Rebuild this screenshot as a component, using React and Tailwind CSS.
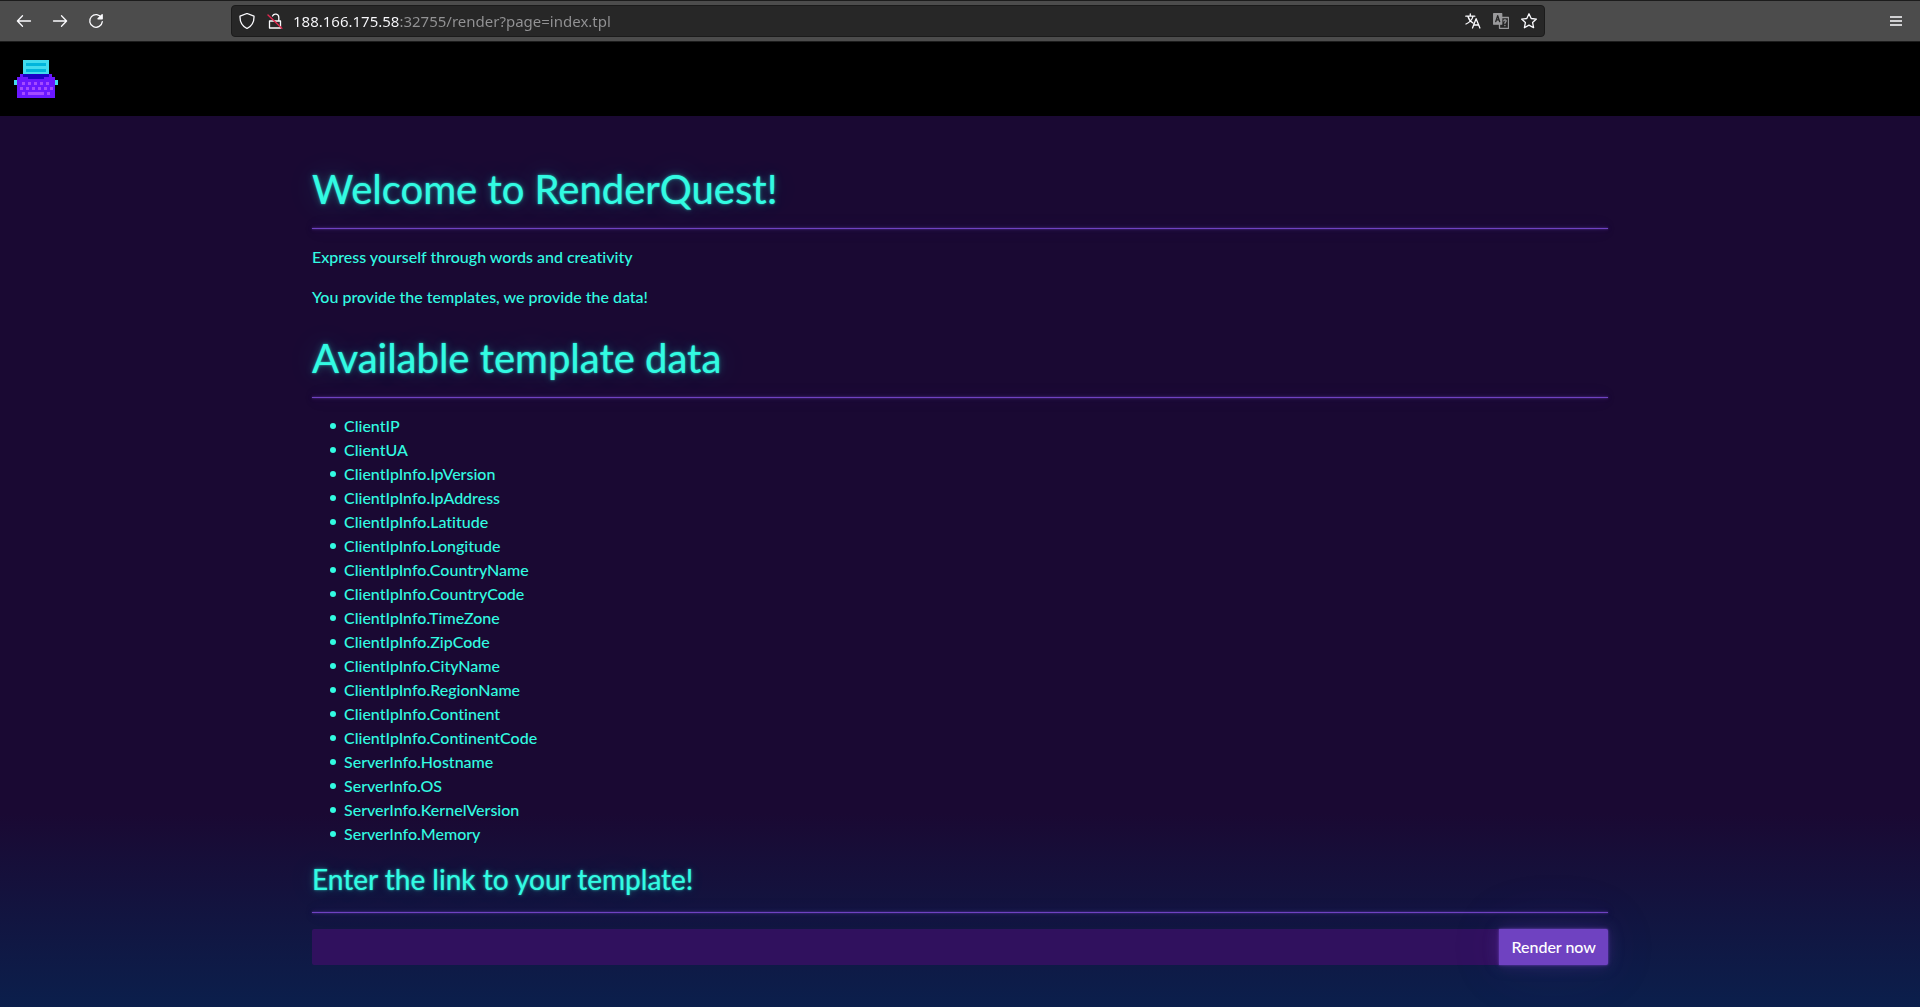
import React from "react";

const templateFields = [
  "ClientIP",
  "ClientUA",
  "ClientIpInfo.IpVersion",
  "ClientIpInfo.IpAddress",
  "ClientIpInfo.Latitude",
  "ClientIpInfo.Longitude",
  "ClientIpInfo.CountryName",
  "ClientIpInfo.CountryCode",
  "ClientIpInfo.TimeZone",
  "ClientIpInfo.ZipCode",
  "ClientIpInfo.CityName",
  "ClientIpInfo.RegionName",
  "ClientIpInfo.Continent",
  "ClientIpInfo.ContinentCode",
  "ServerInfo.Hostname",
  "ServerInfo.OS",
  "ServerInfo.KernelVersion",
  "ServerInfo.Memory",
];

function Icon({ children }) {
  return (
    <svg
      width="16"
      height="16"
      viewBox="0 0 16 16"
      fill="none"
      stroke="currentColor"
      strokeWidth="1.3"
      strokeLinecap="round"
      strokeLinejoin="round"
      aria-hidden="true"
    >
      {children}
    </svg>
  );
}

function IconButton({ label, className = "", children }) {
  return (
    <button type="button" aria-label={label} className={`flex size-4 items-center justify-center ${className}`}>
      <Icon>{children}</Icon>
    </button>
  );
}

function BrowserBar() {
  return (
    <div className="flex h-[42px] items-center border-y border-[#1c1c1c] bg-[#4c4c4c] text-[#fbfbfe]">
      <div className="flex w-[231px] shrink-0 items-center gap-5 pl-4">
        <IconButton label="Back">
          <path d="M14.5 8H1.5M6.5 2.8 1.4 8l5.1 5.2" />
        </IconButton>
        <IconButton label="Forward">
          <path d="M1.5 8h13M9.5 2.8 14.6 8l-5.1 5.2" />
        </IconButton>
        <IconButton label="Reload">
          <path d="M13.6 5A6.3 6.3 0 1 0 14.3 8.6" />
          <path d="M14.2 1.6v4.2H10z" fill="currentColor" />
        </IconButton>
      </div>
      <div className="flex h-8 min-w-0 flex-1 items-center rounded border border-[#1b1b1b] bg-[#272727] px-[7px]">
        <IconButton label="Tracking protection">
          <path d="M8 .5 15 3.2c.2 5.200-1.800 9.600-7 12.300C2.800 12.800.8 8.400 1 3.200z" />
        </IconButton>
        <IconButton label="Connection not secure" className="ml-3">
          <path d="M2.500 8h11v7h-11zM5.500 3a3.300 3.300 0 0 1 6.300 1.300V8" />
          <path d="M1 2l13.800 13.300" stroke="#e22850" strokeWidth="1.4" />
        </IconButton>
        <input
          type="text"
          aria-label="Address"
          defaultValue="188.166.175.58:32755/render?page=index.tpl"
          className="ml-2.5 min-w-0 flex-1 bg-[linear-gradient(90deg,#fbfbfe_106px,#939395_106px)] bg-clip-text font-['Noto_Sans',sans-serif] text-[15px] leading-5 text-transparent outline-none"
        />
        <div className="flex items-center gap-3">
          <IconButton label="Translate page">
            <path d="M.8 3.200h9M5.300 1v2M8 3.400C7 7 4.500 9.500 1 11M3 3.500c.8 3 2.500 5 5 6.500M7.500 15l3.600-9.300L14.900 15M8.700 12h5" />
          </IconButton>
          <IconButton label="Translate selection" className="text-[#9a9a9c]">
            <path d="M.7.7h8v10.500h-8z" fill="currentColor" />
            <path d="M9 4.500h6.500v10.800H6.500v-4" />
            <path d="m2.700 8.700 2-6 2 6M3.300 6.800h2.800" stroke="#272727" />
            <path d="M10.800 7.800c.3-1.400 2.600-1.200 2.300.3-.2.900-1.200.9-1.200 2.200M11.900 12.500v.2" />
          </IconButton>
          <IconButton label="Bookmark this page">
            <path d="m8 .8 2.200 4.700 5.200.6-3.800 3.500 1 5.100L8 12.100l-4.600 2.600 1-5.100L.6 6.100l5.200-.6z" />
          </IconButton>
        </div>
      </div>
      <div className="flex w-[375px] shrink-0 justify-end pr-4">
        <IconButton label="Open application menu">
          <path d="M2 4h12M2 8h12M2 12h12" strokeLinecap="butt" />
        </IconButton>
      </div>
    </div>
  );
}

function TypewriterLogo() {
  return (
    <svg width="44" height="38" viewBox="0 0 44 38" shapeRendering="crispEdges" aria-hidden="true">
      <path fill="#6a17ff" d="M6 14h32v3h3v21H3V17h3z" />
      <path fill="#1e00c8" d="M9 14h26v3h-5v2H14v-2H9z" />
      <path fill="#42dbee" d="M9 0h26v14H9zM0 20h3v5H0zM41 20h3v5h-3z" />
      <path fill="#00b5dc" d="M12 3h20v3H12zM12 9h20v3H12z" />
      <path
        fill="#a34bff"
        d="M8 22h3v3H8zM14 22h3v3h-3zM20 22h3v3h-3zM26 22h3v3h-3zM32 22h3v3h-3zM6 27h3v3H6zM12 27h3v3h-3zM18 27h3v3h-3zM24 27h3v3h-3zM30 27h3v3h-3zM36 27h3v3h-3zM8 32h3v3H8zM14 32h16v3H14zM33 32h3v3h-3z"
      />
    </svg>
  );
}

function Rule() {
  return (
    <hr className="my-4 border-0 border-t border-[#6f42c1] shadow-[0_0_2px_rgba(111,66,193,0.9),0_0_4px_rgba(111,66,193,0.4),0_0_16px_rgba(111,66,193,0.3),0_0_64px_rgba(111,66,193,0.1)]" />
  );
}

const headingGlow =
  "[text-shadow:0_0_1px_rgba(50,251,226,0.6),0_0_3px_rgba(50,251,226,0.5),0_0_8px_rgba(50,251,226,0.3),0_0_32px_rgba(50,251,226,0.2)]";

export default function App() {
  return (
    <div className="flex min-h-screen flex-col font-['Lato',sans-serif] [font-variant-ligatures:none]">
      <BrowserBar />
      <div className="flex-1 bg-[linear-gradient(180deg,#1a0933_80%,#0b1f4c_100%)] text-[#32fbe2]">
        <nav className="flex bg-black px-3.5 py-[18px]">
          <a href="#" aria-label="RenderQuest">
            <TypewriterLogo />
          </a>
        </nav>
        <main className="mx-auto w-full max-w-[1320px] px-3 pt-12">
          <h1 className={`-mb-0.5 text-[40px] leading-[50px] ${headingGlow}`}>Welcome to RenderQuest!</h1>
          <Rule />
          <p className="mb-4 text-base font-medium">Express yourself through words and creativity</p>
          <p className="mb-6 text-base font-medium">You provide the templates, we provide the data!</p>
          <h1 className={`-mb-0.5 text-[40px] leading-[50px] ${headingGlow}`}>Available template data</h1>
          <Rule />
          <ul className="mb-4 pl-[18px] text-base font-medium">
            {templateFields.map((field) => (
              <li
                key={field}
                className="flex items-center gap-2 before:size-1.5 before:rounded-full before:bg-[#32fbe2] before:content-['']"
              >
                {field}
              </li>
            ))}
          </ul>
          <form onSubmit={(event) => event.preventDefault()}>
            <h3 className={`text-[28px] leading-[34px] ${headingGlow}`}>
              <label htmlFor="template-link">Enter the link to your template!</label>
            </h3>
            <Rule />
            <div className="flex h-9">
              <input
                id="template-link"
                type="text"
                className="min-w-0 flex-1 rounded-l-xs bg-[#30115e] px-3 text-base outline-none"
              />
              <button
                type="submit"
                className="rounded-r-xs bg-[#6f42c1] px-3 text-base font-medium text-white shadow-[0_0_2px_rgba(111,66,193,0.9),0_0_4px_rgba(111,66,193,0.4),0_0_16px_rgba(111,66,193,0.3),0_0_64px_rgba(111,66,193,0.1)]"
              >
                Render now
              </button>
            </div>
          </form>
        </main>
      </div>
    </div>
  );
}
